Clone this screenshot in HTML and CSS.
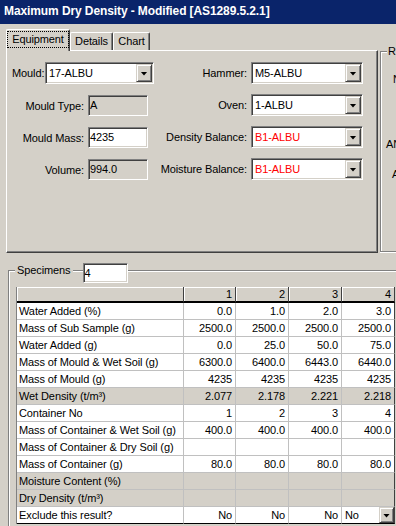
FILE: index.html
```html
<!DOCTYPE html>
<html>
<head>
<meta charset="utf-8">
<link rel="stylesheet" href="styles.css">
</head>
<body>
<div class="title">Maximum Dry Density - Modified [AS1289.5.2.1]</div>
<div class="top">
  <div class="tabctl">
    <div class="tabs">
      <div class="tab sel w-eq"><span class="focus">Equipment</span></div>
      <div class="tab w-de">Details</div>
      <div class="tab w-ch">Chart</div>
    </div>
    <div class="panel">
      <div class="lcol">
        <div class="row r-combo">
          <span class="lab lab-mould">Mould:</span>
          <div class="combo w-mould"><span class="val">17-ALBU</span><span class="btn"><i class="arrow"></i></span></div>
        </div>
        <div class="row r-tb">
          <span class="lab lab-l">Mould Type:</span>
          <div class="tb ro">A</div>
        </div>
        <div class="row r-tb">
          <span class="lab lab-l">Mould Mass:</span>
          <div class="tb">4235</div>
        </div>
        <div class="row r-tb">
          <span class="lab lab-l">Volume:</span>
          <div class="tb ro">994.0</div>
        </div>
      </div>
      <div class="rcol">
        <div class="row r-combo">
          <span class="lab lab-r">Hammer:</span>
          <div class="combo w-r"><span class="val">M5-ALBU</span><span class="btn"><i class="arrow"></i></span></div>
        </div>
        <div class="row r-combo">
          <span class="lab lab-r">Oven:</span>
          <div class="combo w-r"><span class="val">1-ALBU</span><span class="btn"><i class="arrow"></i></span></div>
        </div>
        <div class="row r-combo">
          <span class="lab lab-r">Density Balance:</span>
          <div class="combo w-r"><span class="val red">B1-ALBU</span><span class="btn"><i class="arrow"></i></span></div>
        </div>
        <div class="row r-combo">
          <span class="lab lab-r">Moisture Balance:</span>
          <div class="combo w-r"><span class="val red">B1-ALBU</span><span class="btn"><i class="arrow"></i></span></div>
        </div>
      </div>
    </div>
  </div>
  <div class="results">
    <span class="rleg">R</span>
    <div class="rlab rl1">N</div>
    <div class="rlab rl2">AN</div>
    <div class="rlab rl3">A</div>
  </div>
</div>
<div class="spec">
  <div class="legend">
    <span class="spec-lab">Specimens</span>
    <div class="tb spec-in">4</div>
  </div>
  <table class="grid">
    <colgroup>
      <col class="c-label"><col class="c-n1"><col class="c-n"><col class="c-n"><col class="c-n">
    </colgroup>
    <thead>
      <tr><th></th><th>1</th><th>2</th><th>3</th><th>4</th></tr>
    </thead>
    <tbody>
      <tr><td>Water Added (%)</td><td>0.0</td><td>1.0</td><td>2.0</td><td>3.0</td></tr>
      <tr><td>Mass of Sub Sample (g)</td><td>2500.0</td><td>2500.0</td><td>2500.0</td><td>2500.0</td></tr>
      <tr><td>Water Added (g)</td><td>0.0</td><td>25.0</td><td>50.0</td><td>75.0</td></tr>
      <tr><td>Mass of Mould &amp; Wet Soil (g)</td><td>6300.0</td><td>6400.0</td><td>6443.0</td><td>6440.0</td></tr>
      <tr><td>Mass of Mould (g)</td><td>4235</td><td>4235</td><td>4235</td><td>4235</td></tr>
      <tr class="calc"><td>Wet Density (t/m³)</td><td>2.077</td><td>2.178</td><td>2.221</td><td>2.218</td></tr>
      <tr><td>Container No</td><td>1</td><td>2</td><td>3</td><td>4</td></tr>
      <tr><td>Mass of Container &amp; Wet Soil (g)</td><td>400.0</td><td>400.0</td><td>400.0</td><td>400.0</td></tr>
      <tr><td>Mass of Container &amp; Dry Soil (g)</td><td></td><td></td><td></td><td></td></tr>
      <tr><td>Mass of Container (g)</td><td>80.0</td><td>80.0</td><td>80.0</td><td>80.0</td></tr>
      <tr class="calc"><td>Moisture Content (%)</td><td></td><td></td><td></td><td></td></tr>
      <tr class="calc"><td>Dry Density (t/m³)</td><td></td><td></td><td></td><td></td></tr>
      <tr class="last"><td>Exclude this result?</td><td>No</td><td>No</td><td>No</td><td class="edit"><div class="cell-combo"><span>No</span><span class="btn sm"><i class="arrow"></i></span></div></td></tr>
    </tbody>
  </table>
</div>
</body>
</html>
```

FILE: styles.css
```css
* { box-sizing: border-box; }
html, body { margin: 0; padding: 0; }
body {
  width: 396px;
  height: 526px;
  overflow: hidden;
  background: #d4d0c8;
  color: #000;
  font-family: "Liberation Sans", Arial, sans-serif;
  font-size: 11px;
  letter-spacing: -0.1px;
}

.title {
  height: 24px;
  background: #0a246a;
  color: #fff;
  font-weight: bold;
  font-size: 12px;
  letter-spacing: -0.1px;
  line-height: 16px;
  padding: 3px 0 0 4px;
  white-space: nowrap;
}

.top { display: flex; height: 229px; }

.tabctl {
  margin: 5px 0 0 6px;
  width: 372px;
  flex: none;
  display: flex;
  flex-direction: column;
}
.tabs { display: flex; align-items: flex-end; height: 21px; }
.tab {
  height: 18px;
  border: 1px solid;
  border-color: #fff #404040 transparent #fff;
  border-bottom: 0;
  border-radius: 2px 2px 0 0;
  box-shadow: inset -1px 0 #808080;
  line-height: 17px;
  text-align: center;
  white-space: nowrap;
}
.tab.sel {
  height: 22px;
  margin-bottom: -1px;
  position: relative;
  z-index: 1;
  background: #d4d0c8;
}
.w-eq { width: 64px; }
.w-de { width: 43px; }
.w-ch { width: 37px; }
.focus {
  display: inline-block;
  margin-top: 1px;
  border: 1px dotted #000;
  padding: 0 4px;
  line-height: 15px;
}

.panel {
  height: 203px;
  border: 1px solid;
  border-color: #fff #404040 #404040 #fff;
  box-shadow: inset -1px -1px #808080;
  display: flex;
  padding: 11px 0 0 5px;
}
.lcol { width: 148px; flex: none; }
.rcol { flex: none; }
.row { display: flex; align-items: center; white-space: nowrap; }
.r-combo { height: 22px; }
.r-tb { height: 21px; margin-top: 11px; }
.rcol .row + .row { margin-top: 10px; }
.lab { white-space: nowrap; }
.lab-mould { width: 31px; margin-right: 2px; }
.lab-l { width: 72px; text-align: right; margin-right: 4px; }
.lab-r { width: 87px; text-align: right; margin-right: 4px; }

.combo {
  height: 22px;
  background: #fff;
  border: 1px solid;
  border-color: #808080 #fff #fff #808080;
  box-shadow: inset 1px 1px #404040, inset -1px -1px #d4d0c8;
  padding: 1px 1px 1px 3px;
  display: flex;
  align-items: center;
}
.w-mould { width: 109px; }
.w-r { width: 112px; }
.val { flex: 1; }
.red { color: #f00; }

.btn {
  width: 16px;
  height: 18px;
  flex: none;
  background: #d4d0c8;
  border: 1px solid;
  border-color: #d4d0c8 #404040 #404040 #d4d0c8;
  box-shadow: inset 1px 1px #fff, inset -1px -1px #808080;
  display: flex;
  align-items: center;
  justify-content: center;
  padding-top: 1px;
}
.arrow {
  display: block;
  width: 7px;
  height: 4px;
  background: #000;
  clip-path: polygon(0 0, 100% 0, 50% 100%);
}

.tb {
  width: 60px;
  height: 21px;
  background: #fff;
  border: 1px solid;
  border-color: #808080 #fff #fff #808080;
  box-shadow: inset 1px 1px #404040, inset -1px -1px #d4d0c8;
  padding-left: 1px;
  line-height: 19px;
}
.tb.ro { background: #d4d0c8; }

.results {
  flex: 1;
  margin: 27px 0 0 2px;
  height: 201px;
  border: 1px solid #808080;
  border-right: 0;
  box-shadow: inset 1px 1px #fff, 0 1px #fff;
  white-space: nowrap;
}
.rleg {
  display: block;
  width: max-content;
  margin: -8px 0 0 6px;
  padding: 0 1px;
  background: #d4d0c8;
  line-height: 14px;
}
.rlab { line-height: 13px; }
.rl1 { margin: 15px 0 0 12px; }
.rl2 { margin: 52px 0 0 5px; }
.rl3 { margin: 17px 0 0 11px; }

.spec {
  margin: 17px 0 0 8px;
  height: 256px;
  border-top: 1px solid #808080;
  border-left: 1px solid #808080;
  box-shadow: inset 1px 1px #fff;
}
.legend {
  display: flex;
  align-items: flex-start;
  height: 20px;
  margin-top: -8px;
  padding-left: 6px;
}
.spec-lab {
  background: #d4d0c8;
  padding: 0 2px;
  line-height: 14px;
}
.spec-in { width: 45px; height: 20px; line-height: 18px; margin-left: 10px; }

.grid {
  margin: 4px 0 0 7px;
  border-collapse: separate;
  border-spacing: 0;
  table-layout: fixed;
  width: 379px;
  border-left: 1px solid #808080;
}
.c-label { width: 167px; }
.c-n1 { width: 52px; }
.c-n { width: 53px; }

.grid th {
  height: 16px;
  padding: 0 3px 0 0;
  line-height: 14px;
  font-weight: normal;
  text-align: right;
  background: #d4d0c8;
  border-right: 1px solid #404040;
  border-bottom: 2px solid #000;
  box-shadow: inset 1px 1px #fff;
}
.grid td {
  padding: 0 3px 0 2px;
  line-height: 16px;
  height: 17px;
  text-align: right;
  background: #fff;
  border-right: 1px solid #c0c0c0;
  border-bottom: 1px solid #c0c0c0;
  white-space: nowrap;
  overflow: hidden;
}
.grid td:first-child { text-align: left; }
.grid td:last-child, .grid th:last-child { border-right-color: #404040; }
.grid tr.calc td { background: #d4d0c8; }
.grid tr.last td { border-bottom-color: #000; }
.grid td.edit { padding: 0 0 0 3px; text-align: left; }
.cell-combo { display: flex; align-items: center; height: 16px; }
.cell-combo span:first-child { flex: 1; }
.btn.sm { width: 15px; height: 16px; }
```
